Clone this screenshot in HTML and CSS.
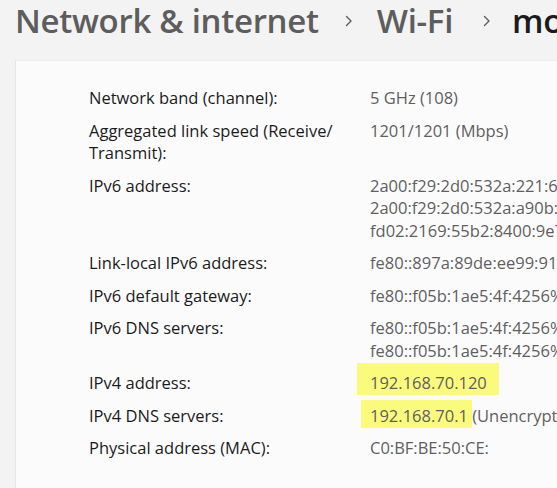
FILE: index.html
```html
<!DOCTYPE html>
<html lang="en">
<head>
<meta charset="UTF-8" />
<title>Wi-Fi properties</title>
<link rel="stylesheet" href="styles.css">
</head>
<body>

<header class="breadcrumb">
  <span class="crumb">Network &amp; internet</span>
  <svg class="sep" width="10" height="12" viewBox="0 0 10 12" aria-hidden="true"><path d="M2.5 1.5 L7 6 L2.5 10.5" fill="none" stroke="#5d5d5d" stroke-width="1.4" stroke-linecap="round" stroke-linejoin="round"/></svg>
  <span class="crumb">Wi-Fi</span>
  <svg class="sep sep-last" width="10" height="12" viewBox="0 0 10 12" aria-hidden="true"><path d="M2.5 1.5 L7 6 L2.5 10.5" fill="none" stroke="#5d5d5d" stroke-width="1.4" stroke-linecap="round" stroke-linejoin="round"/></svg>
  <span class="crumb current">moto</span>
</header>

<section class="card">
  <dl class="props">
    <dt>Network band (channel):</dt>
    <dd>5 GHz (108)</dd>

    <dt>Aggregated link speed (Receive/ Transmit):</dt>
    <dd>1201/1201 (Mbps)</dd>

    <dt>IPv6 address:</dt>
    <dd>2a00:f29:2d0:532a:221:69ab:1c2:4e71<br>2a00:f29:2d0:532a:a90b:1e3c:77a1:5d02<br>fd02:2169:55b2:8400:9e7c:11af:3b20:aa45</dd>

    <dt>Link-local IPv6 address:</dt>
    <dd>fe80::897a:89de:ee99:912c%12</dd>

    <dt>IPv6 default gateway:</dt>
    <dd>fe80::f05b:1ae5:4f:4256%12</dd>

    <dt>IPv6 DNS servers:</dt>
    <dd>fe80::f05b:1ae5:4f:4256%12 (Unencrypted)<br>fe80::f05b:1ae5:4f:4256%12 (Unencrypted)</dd>

    <dt>IPv4 address:</dt>
    <dd><mark class="hl hl-a">192.168.70.120</mark></dd>

    <dt>IPv4 DNS servers:</dt>
    <dd><mark class="hl hl-b">192.168.70.1</mark> (Unencrypted)</dd>

    <dt>Physical address (MAC):</dt>
    <dd>C0:BF:BE:50:CE:</dd>
  </dl>
</section>

</body>
</html>
```

FILE: styles.css
```css
*, *::before, *::after {
  box-sizing: border-box;
}
html, body {
  height: 100%;
}
body {
  margin: 0;
  overflow: hidden;
  background: #f3f3f3;
  font-family: 'Open Sans', 'Noto Sans', sans-serif;
  color: #1b1b1b;
}

/* Breadcrumb title */
.breadcrumb {
  display: flex;
  align-items: center;
  white-space: nowrap;
  height: 60px;
  padding-left: 15px;
  padding-bottom: 18px;
  font-size: 33px;
  font-weight: 600;
  letter-spacing: -0.3px;
  line-height: 42px;
  color: #5d5d5d;
}
.breadcrumb .sep {
  flex: none;
  margin: 0 23px 0 25px;
}
.breadcrumb .sep-last {
  margin: 0 20px 0 29px;
}
.breadcrumb .current {
  color: #1b1b1b;
}

/* Properties card */
.card {
  margin-left: 15px;
  height: calc(100% - 60px);
  background: #fbfbfb;
  border-left: 1px solid #e6e6e6;
  border-top: 1px solid #ededed;
  padding: 26px 0 0 73px;
}

.props {
  display: grid;
  grid-template-columns: 265px auto;
  column-gap: 16px;
  row-gap: 10px;
  margin: 0;
  font-size: 16.5px;
  line-height: 22.5px;
}
.props dt {
  color: #1b1b1b;
}
.props dd {
  margin: 0;
  color: #5f5f5f;
  white-space: nowrap;
}

/* Yellow marker highlights */
.hl {
  background: #fafa7c;
  color: inherit;
  display: inline-block;
}
.hl-a {
  padding: 9px 12px 0 13px;
  margin: -9px -12px 0 -13px;
}
.hl-b {
  padding: 5px 4px 1px 9px;
  margin: -5px -4px -1px -9px;
}
```
